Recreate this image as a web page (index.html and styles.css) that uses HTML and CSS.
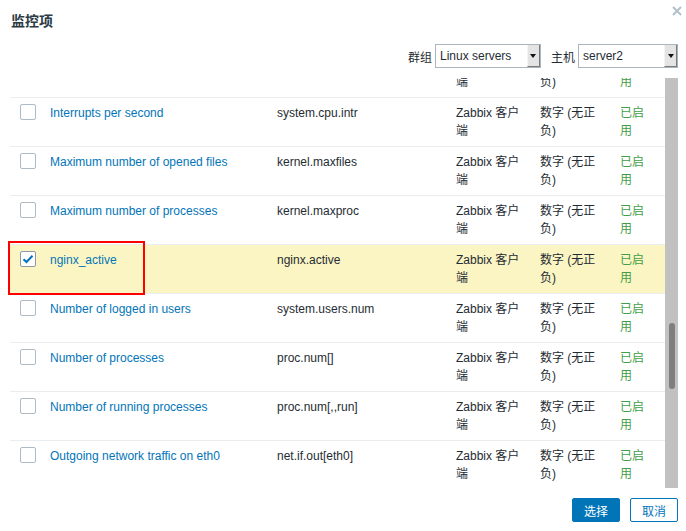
FILE: index.html
```html
<!DOCTYPE html>
<html lang="zh">
<head>
    <meta charset="UTF-8">
    <title>监控项</title>
    <link rel="stylesheet" href="styles.css">
</head>
<body>
    <div class="dialog">
        <div class="head">
            <h4 class="title">监控项</h4>
            <span class="close">
                <svg width="10" height="10" viewBox="0 0 10 10"><path d="M1 1L9 9M9 1L1 9" stroke="#b3c0ca" stroke-width="2"/></svg>
            </span>
        </div>

        <div class="filter">
            <label>群组</label>
            <div class="select sel-group"><span>Linux servers</span><i class="arrow"></i></div>
            <label>主机</label>
            <div class="select sel-host"><span>server2</span><i class="arrow"></i></div>
        </div>

        <div class="body">
            <div class="viewport">
                <table class="items">
                    <colgroup>
                        <col style="width:35px"><col style="width:227px"><col style="width:179px">
                        <col style="width:84px"><col style="width:80px"><col style="width:50px">
                    </colgroup>
                    <tr>
                        <td class="cb"><span class="check"></span></td>
                        <td><a href="#">Incoming network traffic on eth0</a></td>
                        <td>net.if.in[eth0]</td>
                        <td class="type">Zabbix 客户端</td>
                        <td class="vtype">数字 (无正负)</td>
                        <td class="status">已启用</td>
                    </tr>
                    <tr>
                        <td class="cb"><span class="check"></span></td>
                        <td><a href="#">Interrupts per second</a></td>
                        <td>system.cpu.intr</td>
                        <td class="type">Zabbix 客户端</td>
                        <td class="vtype">数字 (无正负)</td>
                        <td class="status">已启用</td>
                    </tr>
                    <tr>
                        <td class="cb"><span class="check"></span></td>
                        <td><a href="#">Maximum number of opened files</a></td>
                        <td>kernel.maxfiles</td>
                        <td class="type">Zabbix 客户端</td>
                        <td class="vtype">数字 (无正负)</td>
                        <td class="status">已启用</td>
                    </tr>
                    <tr>
                        <td class="cb"><span class="check"></span></td>
                        <td><a href="#">Maximum number of processes</a></td>
                        <td>kernel.maxproc</td>
                        <td class="type">Zabbix 客户端</td>
                        <td class="vtype">数字 (无正负)</td>
                        <td class="status">已启用</td>
                    </tr>
                    <tr class="selected">
                        <td class="cb"><span class="check checked"><svg width="12" height="10" viewBox="0 0 12 10"><path d="M1.5 5.2L4.5 8L10.5 1.8" fill="none" stroke="#0275b8" stroke-width="2"/></svg></span></td>
                        <td><a href="#">nginx_active</a></td>
                        <td>nginx.active</td>
                        <td class="type">Zabbix 客户端</td>
                        <td class="vtype">数字 (无正负)</td>
                        <td class="status">已启用</td>
                    </tr>
                    <tr>
                        <td class="cb"><span class="check"></span></td>
                        <td><a href="#">Number of logged in users</a></td>
                        <td>system.users.num</td>
                        <td class="type">Zabbix 客户端</td>
                        <td class="vtype">数字 (无正负)</td>
                        <td class="status">已启用</td>
                    </tr>
                    <tr>
                        <td class="cb"><span class="check"></span></td>
                        <td><a href="#">Number of processes</a></td>
                        <td>proc.num[]</td>
                        <td class="type">Zabbix 客户端</td>
                        <td class="vtype">数字 (无正负)</td>
                        <td class="status">已启用</td>
                    </tr>
                    <tr>
                        <td class="cb"><span class="check"></span></td>
                        <td><a href="#">Number of running processes</a></td>
                        <td>proc.num[,,run]</td>
                        <td class="type">Zabbix 客户端</td>
                        <td class="vtype">数字 (无正负)</td>
                        <td class="status">已启用</td>
                    </tr>
                    <tr>
                        <td class="cb"><span class="check"></span></td>
                        <td><a href="#">Outgoing network traffic on eth0</a></td>
                        <td>net.if.out[eth0]</td>
                        <td class="type">Zabbix 客户端</td>
                        <td class="vtype">数字 (无正负)</td>
                        <td class="status">已启用</td>
                    </tr>
                </table>
            </div>
            <div class="scrollbar"><div class="thumb"></div></div>
            <div class="mark"></div>
        </div>

        <div class="footer">
            <button class="btn primary">选择</button>
            <button class="btn">取消</button>
        </div>
    </div>
</body>
</html>
```

FILE: styles.css
```css
body {
    margin: 0;
    background-color: white;
    color: #1f2c33;
    font-family: "Liberation Sans", Arial, "Noto Sans CJK SC", sans-serif;
    font-size: 12px;
}
.dialog {
    width: 686px;
    height: 531px;
    position: relative;
}
.head {
    height: 34px;
    padding: 10px 0 0 11px;
    box-sizing: border-box;
    display: flex;
    justify-content: space-between;
}
.title {
    margin: 0;
    font-size: 14px;
    line-height: 22px;
    font-weight: bold;
    color: #2c3a44;
}
.close {
    margin: -5px 4px 0 0;
    height: 10px;
}
.filter {
    margin-top: 10px;
    height: 24px;
    display: flex;
    justify-content: flex-end;
    align-items: center;
    padding-right: 8px;
}
.filter label {
    margin-right: 3px;
}
.select {
    height: 24px;
    box-sizing: border-box;
    border: 1px solid #a9b6bf;
    display: flex;
    align-items: center;
    justify-content: space-between;
    padding-left: 4px;
    background-color: white;
}
.sel-group {
    width: 106px;
    margin-right: 10px;
}
.sel-host {
    width: 100px;
}
.arrow {
    width: 13px;
    height: 22px;
    box-sizing: border-box;
    background-color: #e4e4e4;
    border-right: 1px solid #7a7a7a;
    border-bottom: 1px solid #7a7a7a;
    border-left: 1px solid #f4f4f4;
    display: flex;
    align-items: center;
    justify-content: center;
}
.arrow::after {
    content: "";
    border-left: 3px solid transparent;
    border-right: 3px solid transparent;
    border-top: 4px solid #111;
}
.body {
    margin: 10px 8px 0 10px;
    height: 410px;
    display: flex;
    position: relative;
}
.viewport {
    flex: 1;
    overflow: hidden;
}
.items {
    margin-top: -29px;
    width: 655px;
    table-layout: fixed;
    border-collapse: collapse;
}
.items td {
    padding: 6px 5px;
    line-height: 18px;
    vertical-align: top;
    border-bottom: 1px solid #ebeef0;
    height: 36px;
}
.items td.cb {
    padding: 6px 0 0 10px;
}
.items td.type {
    padding-right: 10px;
}
.items td.vtype {
    padding-right: 15px;
}
.items td.status {
    padding-right: 15px;
    color: #429e47;
}
.items a {
    color: #0275b8;
    text-decoration: none;
}
.items tr.selected td {
    background-color: #fbf5c3;
}
.check {
    display: flex;
    align-items: center;
    justify-content: center;
    width: 16px;
    height: 16px;
    box-sizing: border-box;
    border: 1px solid #acbbc7;
    border-radius: 2px;
    background-color: white;
}
.check.checked {
    border-color: #8a9aa6;
}
.scrollbar {
    width: 13px;
    background-color: #c1c1c1;
}
.thumb {
    margin: 245px 0 0 4px;
    width: 6px;
    height: 66px;
    border-radius: 3px;
    background-color: #7f7f7f;
}
.mark {
    position: absolute;
    left: -2px;
    top: 163px;
    width: 137px;
    height: 54px;
    box-sizing: border-box;
    border: 2px solid #f00;
}
.footer {
    margin-top: 10px;
    display: flex;
    justify-content: flex-end;
    gap: 10px;
    padding-right: 8px;
}
.btn {
    width: 48px;
    height: 24px;
    font-family: "Liberation Sans", "Noto Sans CJK SC", sans-serif;
    font-size: 12px;
    border: 1px solid #0275b8;
    border-radius: 2px;
    background-color: white;
    color: #0275b8;
    padding: 0;
}
.btn.primary {
    background-color: #0275b8;
    color: white;
}
```
